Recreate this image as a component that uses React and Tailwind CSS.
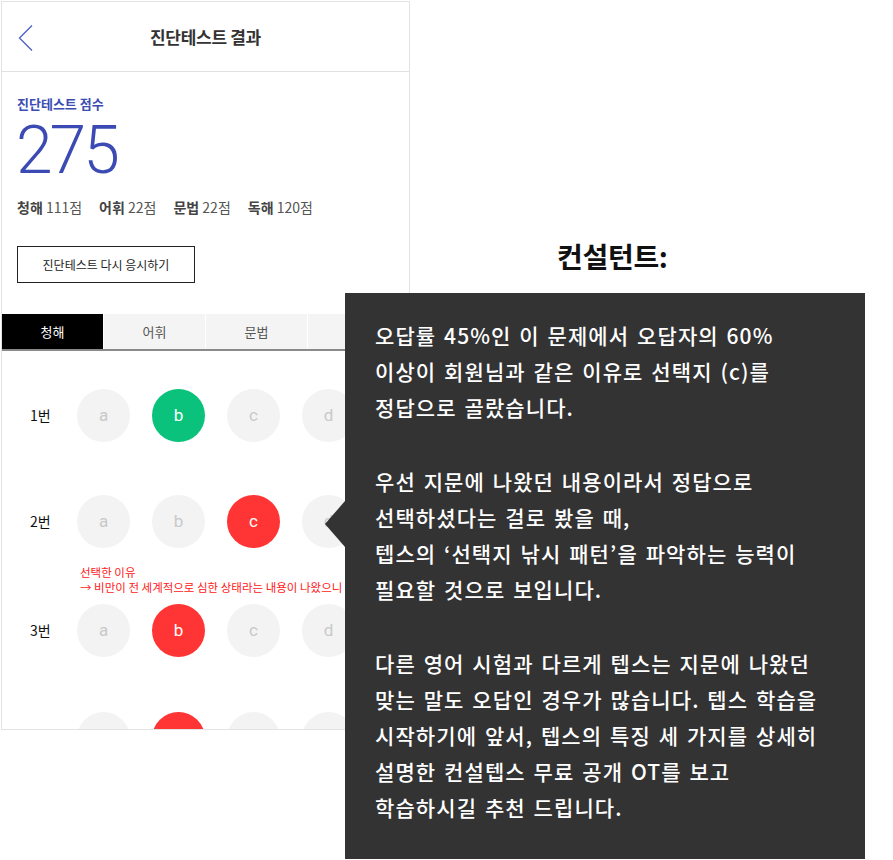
import React from 'react';

const KR = "font-['Noto_Sans_CJK_KR','Noto_Sans',sans-serif]";

const scores = [
  { label: '청해', value: '111점' },
  { label: '어휘', value: '22점' },
  { label: '문법', value: '22점' },
  { label: '독해', value: '120점' },
];

const tabs = ['청해', '어휘', '문법', '독해'];

// picked: index of the chosen option, ok: whether it was right
const questions = [
  { no: '1번', picked: 1, ok: true },
  { no: '2번', picked: 2, ok: false },
  { no: '3번', picked: 1, ok: false },
  { no: '4번', picked: 1, ok: false },
];

const Choice = ({ letter, state }) => {
  const cls =
    state === 'ok'
      ? 'bg-[#0bc27c] text-white'
      : state === 'bad'
      ? 'bg-[#ff3434] text-white'
      : 'bg-[#f3f3f3] text-[#c9c9c9]';
  return (
    <div className={`w-[53px] h-[53px] rounded-full flex items-center justify-center text-[17px] font-['Roboto',sans-serif] ${cls}`}>
      {letter}
    </div>
  );
};

const QuestionRow = ({ q }) => (
  <div className="flex items-center h-[53px]">
    <div className="w-[75px] pl-[28px] text-[14px] text-[#111]">{q.no}</div>
    <div className="flex gap-[22px]">
      {['a', 'b', 'c', 'd'].map((l, i) => (
        <Choice key={l} letter={l} state={i === q.picked ? (q.ok ? 'ok' : 'bad') : 'none'} />
      ))}
    </div>
  </div>
);

const ResultScreen = () => (
  <div className="ml-px mt-px w-[409px] h-[729px] border border-[#e3e3e3] overflow-hidden bg-white">
    <header className="relative h-[70px] border-b border-[#e0e0e0] flex items-center justify-center">
      <svg className="absolute left-[15px] top-[22px]" width="18" height="28" viewBox="0 0 18 28">
        <path d="M15 1.5 L2.5 14 L15 26.5" fill="none" stroke="#4a5fc1" strokeWidth="1.3" />
      </svg>
      <h1 className="text-[17px] font-bold text-[#333] tracking-[-0.3px]">진단테스트 결과</h1>
    </header>

    <section className="px-[15px] pt-[24px]">
      <p className="text-[13px] font-bold text-[#3b4db3] leading-[16px]">진단테스트 점수</p>
      <p className="mt-[6px] font-['Roboto',sans-serif] font-light text-[66px] leading-[66px] text-[#3b4bb3] tracking-[-3px] -ml-[1px]">275</p>
      <div className="flex gap-[17px] mt-[14px] text-[14px] text-[#555] leading-[18px]">
        {scores.map(s => (
          <span key={s.label}>
            <b className="text-[#444]">{s.label}</b> {s.value}
          </span>
        ))}
      </div>
      <button className="mt-[30px] w-[178px] h-[37px] border border-[#222] text-[12px] text-[#222] bg-white">
        진단테스트 다시 응시하기
      </button>
    </section>

    <nav className="mt-[31px] flex gap-px border-b-2 border-[#8a8a8a]">
      {tabs.map((t, i) => (
        <div
          key={t}
          className={`w-[102px] h-[35px] flex items-center justify-center text-[13px] ${i === 0 ? 'bg-black text-white' : 'bg-[#f4f4f4] text-[#555]'}`}
        >
          {t}
        </div>
      ))}
    </nav>

    <div className="pt-[38px] flex flex-col">
      <QuestionRow q={questions[0]} />
      <div className="h-[53px]" />
      <QuestionRow q={questions[1]} />
      <div className="h-[56px] pl-[78px] pt-[17px] text-[11.5px] leading-[15px] text-[#ff2020] whitespace-nowrap">
        <p>선택한 이유</p>
        <p>→ 비만이 전 세계적으로 심한 상태라는 내용이 나왔으니</p>
      </div>
      <QuestionRow q={questions[2]} />
      <div className="h-[55px]" />
      <QuestionRow q={questions[3]} />
    </div>
  </div>
);

const paragraphs = [
  ['오답률 45%인 이 문제에서 오답자의 60%', '이상이 회원님과 같은 이유로 선택지 (c)를', '정답으로 골랐습니다.'],
  ['우선 지문에 나왔던 내용이라서 정답으로', '선택하셨다는 걸로 봤을 때,', '텝스의 ‘선택지 낚시 패턴’을 파악하는 능력이', '필요할 것으로 보입니다.'],
  [
    '다른 영어 시험과 다르게 텝스는 지문에 나왔던',
    '맞는 말도 오답인 경우가 많습니다. 텝스 학습을',
    '시작하기에 앞서, 텝스의 특징 세 가지를 상세히',
    '설명한 컨설텝스 무료 공개 OT를 보고',
    '학습하시길 추천 드립니다.',
  ],
];

const ConsultantNote = () => (
  <div className="absolute left-[345px] top-[292px] w-[520px] h-[566px] bg-[#333333] pl-[30px] pt-[24px] text-white text-[21px] font-medium leading-[36px] tracking-[1.1px] [word-spacing:2px]">
    <div className="absolute -left-[20px] top-[208px] w-0 h-0 border-y-[23px] border-y-transparent border-r-[20px] border-r-[#333333]" />
    {paragraphs.map((lines, i) => (
      <p key={i} className={i > 0 ? 'mt-[38px]' : ''}>
        {lines.map(l => (
          <span key={l} className="block whitespace-nowrap">{l}</span>
        ))}
      </p>
    ))}
  </div>
);

export default function App() {
  return (
    <div className={`relative w-[893px] h-[860px] bg-white ${KR}`}>
      <ResultScreen />
      <p className="absolute left-[557px] top-[236px] text-[28px] font-bold text-[#111] leading-[38px] tracking-[-0.3px]">컨설턴트:</p>
      <ConsultantNote />
    </div>
  );
}
